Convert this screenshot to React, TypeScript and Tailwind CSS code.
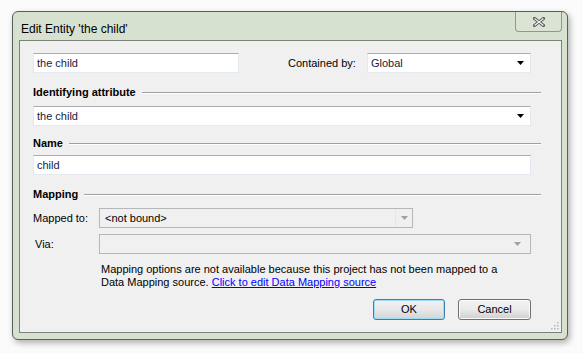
import React from 'react';

const font = { fontFamily: '"Liberation Sans", Arial, sans-serif' };

const Arrow = ({ disabled }: { disabled?: boolean }) => (
  <svg width="7" height="4" viewBox="0 0 7 4" className="shrink-0">
    <path d="M0 0H7L3.5 4Z" fill={disabled ? '#a0a0a0' : '#000'} />
  </svg>
);

const Section = ({ title }: { title: string }) => (
  <div className="flex items-center gap-[6px] h-[14px]">
    <span className="font-bold text-black">{title}</span>
    <div className="flex-1 h-[2px] border-t border-[#a0a0a0] border-b border-b-white mt-[1px]" />
  </div>
);

const Combo = ({ value, className }: { value: string; className: string }) => (
  <div
    className={`${className} h-[20px] bg-white border border-[#e3e9ef] border-t-[#abadb3] flex items-center pl-[3px] pr-[6px]`}
  >
    <span className="flex-1 text-[#1a1a40]">{value}</span>
    <Arrow />
  </div>
);

export default function App() {
  return (
    <div className="w-[583px] h-[353px] bg-[#fbfbfb] pt-[11px] pl-[12px] text-[11px]" style={font}>
      <div className="w-[556px] h-[329px] rounded-[6px] bg-[#d7e1cf] border border-[#5a5f58] shadow-[2px_3px_6px_rgba(0,0,0,0.3)] flex flex-col relative">
        {/* title bar */}
        <div className="h-[28px] flex items-start pl-[8px] pr-[5px]">
          <span className="mt-[8px] text-[12px] text-black">Edit Entity 'the child'</span>
          <div className="ml-auto w-[47px] h-[20px] border border-[#8a9a8c] border-t-0 rounded-b-[4px] bg-[#dbe4d4] flex items-center justify-center">
            <svg width="12" height="10" viewBox="0 0 12 10">
              <path d="M1.5 1.5L10.5 8.5M10.5 1.5L1.5 8.5" stroke="#50565a" strokeWidth="3" strokeLinecap="square" />
              <path d="M1.5 1.5L10.5 8.5M10.5 1.5L1.5 8.5" stroke="#f4f6f2" strokeWidth="1.2" />
            </svg>
          </div>
        </div>
        {/* client area */}
        <div className="ml-[6px] mr-[5px] mb-[6px] flex-1 border border-[#7c8278] bg-[#f0f0f0] pl-[13px] pr-[30px] pt-[12px] relative">
          <div className="flex items-center h-[20px]">
            <div className="w-[206px] h-[20px] bg-white border border-[#e3e9ef] border-t-[#abadb3] flex items-center pl-[3px] text-[#1a1a40]">
              the child
            </div>
            <span className="ml-[49px] text-black">Contained by:</span>
            <Combo value="Global" className="ml-auto w-[164px]" />
          </div>

          <div className="mt-[12px] mr-[-10px]">
            <Section title="Identifying attribute" />
          </div>
          <Combo value="the child" className="mt-[7px] w-full" />

          <div className="mt-[10px] mr-[-10px]">
            <Section title="Name" />
          </div>
          <div className="mt-[5px] h-[20px] bg-white border border-[#e3e9ef] border-t-[#abadb3] flex items-center pl-[3px] text-[#1a1a40]">
            child
          </div>

          <div className="mt-[12px] mr-[-10px]">
            <Section title="Mapping" />
          </div>

          <div className="mt-[7px] flex items-center h-[20px]">
            <span className="w-[66px] text-black">Mapped to:</span>
            <div className="w-[314px] h-[20px] border border-[#b4b8bb] bg-[#f0f0f0] flex items-center pl-[5px] text-black">
              <span className="flex-1">&lt;not bound&gt;</span>
              <div className="w-[17px] h-full border-l border-[#e6e6e6] flex items-center justify-center">
                <Arrow disabled />
              </div>
            </div>
          </div>
          <div className="mt-[6px] flex items-center h-[20px]">
            <span className="w-[66px] pl-[2px] text-black">Via:</span>
            <div className="flex-1 h-[20px] border border-[#b4b8bb] bg-[#f0f0f0] flex items-center justify-end pr-[4px]">
              <div className="w-[17px] h-full flex items-center justify-center">
                <Arrow disabled />
              </div>
            </div>
          </div>

          <div className="mt-[9px] ml-[68px] leading-[13px] text-black">
            Mapping options are not available because this project has not been mapped to a
            <br />
            Data Mapping source.{' '}
            <span className="text-[#0000ff] underline">Click to edit Data Mapping source</span>
          </div>

          <div className="mt-[10px] flex justify-end gap-[13px]">
            <button className="w-[72px] h-[21px] rounded-[3px] border border-[#3c7fb1] bg-gradient-to-b from-[#f2f2f2] via-[#e8e8e8] to-[#d4d4d4] shadow-[inset_0_0_0_1px_#9fdcf6] text-black text-[11px]">
              OK
            </button>
            <button className="w-[73px] h-[21px] rounded-[3px] border border-[#707070] bg-gradient-to-b from-[#f2f2f2] via-[#ebebeb] to-[#cfcfcf] shadow-[inset_0_0_0_1px_#fbfbfb] text-black text-[11px]">
              Cancel
            </button>
          </div>

          <svg width="9" height="9" viewBox="0 0 9 9" className="absolute right-[2px] bottom-[2px]">
            {[
              [7, 1],
              [7, 4],
              [4, 4],
              [7, 7],
              [4, 7],
              [1, 7],
            ].map(([x, y], i) => (
              <rect key={i} x={x} y={y} width="1.5" height="1.5" fill="#b8b8b8" />
            ))}
          </svg>
        </div>
      </div>
    </div>
  );
}
